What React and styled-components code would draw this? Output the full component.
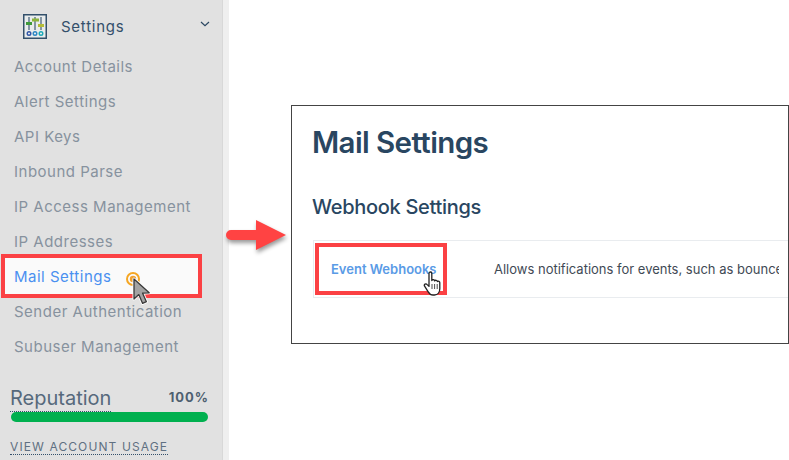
import React from 'react';
import styled, { createGlobalStyle } from 'styled-components';

const navItems = [
	'Account Details',
	'Alert Settings',
	'API Keys',
	'Inbound Parse',
	'IP Access Management',
	'IP Addresses',
	'Mail Settings',
	'Sender Authentication',
	'Subuser Management',
];

export default function App() {
	return (
		<Page>
			<GlobalStyle />
			<Sidebar>
				<SettingsRow>
					<SettingsIcon />
					<SettingsLabel>Settings</SettingsLabel>
					<Chevron viewBox="0 0 10 6">
						<path d="M1 1l4 3.6L9 1" fill="none" stroke="#294661" strokeWidth="1.2" />
					</Chevron>
				</SettingsRow>
				<NavList>
					{navItems.map((item) => (
						<NavItem key={item} $active={item === 'Mail Settings'}>
							{item === 'Mail Settings' && <Highlight />}
							<NavLabel>{item}</NavLabel>
							{item === 'Mail Settings' && <ClickCursor />}
						</NavItem>
					))}
				</NavList>
				<ReputationHead>
					<ReputationLabel>Reputation</ReputationLabel>
					<ReputationValue>100%</ReputationValue>
				</ReputationHead>
				<Bar />
				<UsageLink>VIEW ACCOUNT USAGE</UsageLink>
			</Sidebar>
			<Gutter />
			<Main>
				<ArrowIcon />
				<Panel>
					<Title>Mail Settings</Title>
					<Subtitle>Webhook Settings</Subtitle>
					<Row>
						<RowName>
							Event Webhooks
							<RowHighlight />
							<HandCursor />
						</RowName>
						<RowText>Allows notifications for events, such as bounces</RowText>
					</Row>
				</Panel>
			</Main>
		</Page>
	);
}

function SettingsIcon() {
	return (
		<IconSvg viewBox="0 0 24 25">
			<rect x="0.75" y="0.75" width="22.5" height="23.5" fill="#e9ecec" stroke="#33506b" strokeWidth="1.5" />
			<path d="M6 3v13M12 3v13M18 3v13" stroke="#33506b" strokeWidth="1.1" />
			<rect x="3" y="8" width="6" height="3" fill="#3e9a3a" />
			<rect x="9" y="4.5" width="7" height="3" fill="#8cb43c" />
			<rect x="15" y="10" width="6" height="3" fill="#b4bd38" />
			<circle cx="6" cy="19.5" r="1.8" fill="#e9ecec" stroke="#2f55a8" strokeWidth="1.4" />
			<circle cx="12" cy="19.5" r="1.8" fill="#e9ecec" stroke="#2b86c4" strokeWidth="1.4" />
			<circle cx="18" cy="19.5" r="1.8" fill="#e9ecec" stroke="#19a9b8" strokeWidth="1.4" />
		</IconSvg>
	);
}

function ClickCursor() {
	return (
		<CursorSvg viewBox="0 0 28 38">
			<circle cx="8" cy="8" r="6" fill="none" stroke="#f5a623" strokeWidth="2" />
			<circle cx="8" cy="8" r="3.2" fill="#f0a030" />
			<path d="M9 8v20l4.8-4.4 3.8 8.8 3.8-1.7-3.8-8.5 6.6-.4z" fill="#a3a3a3" stroke="#fff" strokeWidth="3" strokeLinejoin="round" />
			<path d="M9 8v20l4.8-4.4 3.8 8.8 3.8-1.7-3.8-8.5 6.6-.4z" fill="#a3a3a3" stroke="#3a3a3a" strokeWidth="1.3" strokeLinejoin="round" />
		</CursorSvg>
	);
}

function HandCursor() {
	return (
		<HandSvg viewBox="0 0 20 26">
			<path
				d="M6 2.5c0-2 2.8-2 2.8 0v7c.6-1.2 2.6-1 2.8.4.6-1 2.6-.8 2.8.6.8-.7 2.4-.2 2.4 1.2v6c0 3.4-2 6.3-5.4 6.3H10c-2.4 0-3.6-1.2-4.8-3.2L1.6 15.2c-1-1.8 1.2-3.2 2.6-1.6L6 15.4z"
				fill="#fff"
				stroke="#222"
				strokeWidth="1.3"
				strokeLinejoin="round"
			/>
			<path d="M9 13v5M11.6 13v5M14.2 13v5" stroke="#222" strokeWidth="0.8" />
		</HandSvg>
	);
}

function ArrowIcon() {
	return (
		<ArrowSvg viewBox="0 0 60 30">
			<path d="M5 10h25V0l30 15-30 15V20H5a5 5 0 010-10z" fill="#ff4343" />
		</ArrowSvg>
	);
}

const GlobalStyle = createGlobalStyle`
	html, body {
		margin: 0;
		padding: 0;
		background: #fff;
	}
`;

const Page = styled.div`
	display: flex;
	width: 789px;
	height: 460px;
	overflow: hidden;
	font-family: Inter, "Liberation Sans", sans-serif;
`;

const Sidebar = styled.div`
	display: flex;
	flex-direction: column;
	flex: none;
	box-sizing: border-box;
	width: 222px;
	height: 460px;
	padding: 0 14px 0 10px;
	background: #e1e1e1;
`;

const Gutter = styled.div`
	flex: none;
	width: 7px;
	background: #efefef;
	border-left: 1px solid #d8d8d8;
	box-sizing: border-box;
`;

const SettingsRow = styled.div`
	display: flex;
	align-items: center;
	height: 49px;
	padding: 3px 0 0 13px;
	box-sizing: border-box;
`;

const IconSvg = styled.svg`
	flex: none;
	width: 24px;
	height: 25px;
`;

const SettingsLabel = styled.span`
	margin-left: 14px;
	font-size: 15px;
	letter-spacing: 0.75px;
	color: #34506b;
`;

const Chevron = styled.svg`
	width: 10px;
	height: 6px;
	margin: -4px -2px 0 auto;
`;

const NavList = styled.div`
	display: flex;
	flex-direction: column;
`;

const NavItem = styled.div`
	position: relative;
	display: flex;
	align-items: center;
	height: 35px;
	padding-left: 4px;
	font-size: 15px;
	letter-spacing: 0.5px;
	white-space: nowrap;
	color: ${(props) => (props.$active ? '#4a90f0' : '#87929e')};
`;

const NavLabel = styled.span`
	position: relative;
	z-index: 1;
`;

const Highlight = styled.span`
	position: absolute;
	left: -9px;
	top: -5px;
	width: 201px;
	height: 44px;
	box-sizing: border-box;
	border: 4px solid #fb4144;
	background: #fafafa;
`;

const CursorSvg = styled.svg`
	position: absolute;
	left: 115px;
	top: 12px;
	width: 28px;
	height: 38px;
	z-index: 2;
`;

const ReputationHead = styled.div`
	display: flex;
	align-items: center;
	justify-content: space-between;
	margin-top: 20px;
	height: 28px;
	margin-right: -1px;
`;

const ReputationLabel = styled.span`
	font-size: 20px;
	letter-spacing: 0;
	line-height: 26px;
	color: #56697c;
	border-bottom: 1px dotted #34506b;
`;

const ReputationValue = styled.span`
	margin-top: -3px;
	font-size: 13px;
	font-weight: 700;
	letter-spacing: 1px;
	color: #4d5f70;
`;

const Bar = styled.div`
	flex: none;
	margin: 0 0 0 1px;
	height: 10px;
	border-radius: 5px;
	background: #00b04f;
`;

const UsageLink = styled.span`
	align-self: flex-start;
	margin-top: 17px;
	font-size: 12px;
	line-height: 15px;
	letter-spacing: 1.1px;
	white-space: nowrap;
	color: #5f7082;
	border-bottom: 1px dotted #34506b;
`;

const Main = styled.div`
	display: flex;
	align-items: flex-start;
	flex: 1;
	min-width: 0;
	padding-top: 105px;
`;

const ArrowSvg = styled.svg`
	flex: none;
	width: 60px;
	height: 30px;
	margin: 115px 0 0 -3px;
	filter: drop-shadow(1px 3px 2px rgba(0, 0, 0, 0.4));
	overflow: visible;
`;

const Panel = styled.div`
	flex: none;
	box-sizing: border-box;
	width: 498px;
	height: 239px;
	margin-left: 5px;
	padding: 0 0 0 20px;
	border: 1px solid #444;
	overflow: hidden;
`;

const Title = styled.h1`
	margin: 16px 0 0;
	font-size: 29.5px;
	line-height: 40px;
	font-weight: 600;
	letter-spacing: -0.6px;
	color: #294661;
`;

const Subtitle = styled.h2`
	margin: 32px 0 0;
	font-size: 20px;
	line-height: 26px;
	font-weight: 500;
	letter-spacing: -0.3px;
	color: #294661;
`;

const Row = styled.div`
	display: flex;
	align-items: center;
	height: 58px;
	margin: 20px 0 0 1px;
	box-sizing: border-box;
	border: 1px solid #e9ecef;
	border-right: none;
`;

const RowName = styled.div`
	position: relative;
	flex: none;
	width: 180px;
	padding-left: 17px;
	box-sizing: border-box;
	font-size: 13px;
	font-weight: 600;
	white-space: nowrap;
	color: #5a9be6;
`;

const RowHighlight = styled.span`
	position: absolute;
	left: 1px;
	top: -18px;
	width: 132px;
	height: 52px;
	box-sizing: border-box;
	border: 4px solid #fb4144;
`;

const HandSvg = styled.svg`
	position: absolute;
	left: 109px;
	top: 10px;
	width: 20px;
	height: 26px;
`;

const RowText = styled.div`
	width: 285px;
	overflow: hidden;
	font-size: 13px;
	white-space: nowrap;
	color: #3f4a55;
`;
